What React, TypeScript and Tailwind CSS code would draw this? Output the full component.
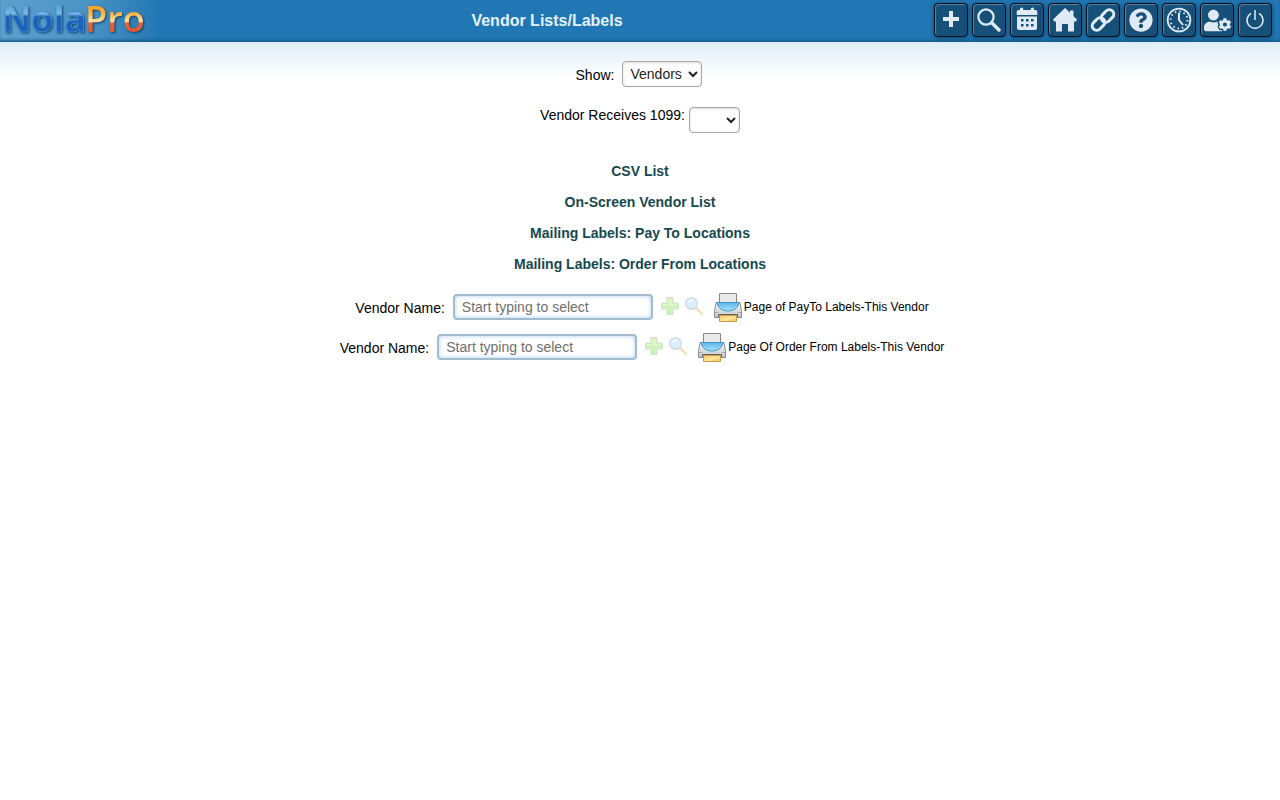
import type { ReactNode } from "react";
import { FaQuestionCircle, FaUserCog } from "react-icons/fa";

type NavButtonProps = {
  label: string;
  children: ReactNode;
};

function NavButton({ label, children }: NavButtonProps) {
  return (
    <button
      type="button"
      aria-label={label}
      className="flex h-[34px] w-[34px] items-center justify-center rounded-[4px] border border-[#020d1c] bg-[#165079] text-[#dfeaf5] shadow-[inset_1px_1px_1px_#5287aa,0_1px_4px_#0d4166]"
    >
      {children}
    </button>
  );
}

function Logo() {
  return (
    <svg
      className="h-[42px] w-40 overflow-visible font-['Open_Sans',sans-serif] drop-shadow-[1px_1px_1px_#123f66]"
      viewBox="0 0 160 42"
      role="img"
      aria-label="NolaPro"
    >
      <defs>
        <linearGradient id="logo-nola" gradientUnits="userSpaceOnUse" x1="0" y1="4" x2="0" y2="32">
          <stop offset="0" stopColor="#4a9adb" />
          <stop offset="0.350" stopColor="#7cbbea" />
          <stop offset="0.450" stopColor="#1a62c0" />
          <stop offset="1" stopColor="#1d63bb" />
        </linearGradient>
        <linearGradient id="logo-pro" gradientUnits="userSpaceOnUse" x1="0" y1="4" x2="0" y2="32">
          <stop offset="0" stopColor="#ff9f1c" />
          <stop offset="0.300" stopColor="#ffae35" />
          <stop offset="0.620" stopColor="#ffe3a6" />
          <stop offset="0.680" stopColor="#e9653c" />
          <stop offset="1" stopColor="#e2552f" />
        </linearGradient>
      </defs>
      <text x="2" y="32" fontSize="36" fontWeight="700" fill="url(#logo-nola)" stroke="#5fa5d8" strokeWidth="0.500">
        Nola
      </text>
      <text x="85" y="32" fontSize="36" fontWeight="600" fill="url(#logo-pro)">
        Pro
      </text>
    </svg>
  );
}

function PlusIcon() {
  return (
    <svg className="mb-0.5 h-4 w-4" viewBox="0 0 16 16" fill="currentColor">
      <path d="M6 0h4v6h6v4h-6v6H6v-6H0V6h6z" />
    </svg>
  );
}

function SearchIcon() {
  return (
    <svg className="h-6 w-6" viewBox="0 0 24 24" fill="none" stroke="currentColor">
      <circle cx="9" cy="9" r="7.600" strokeWidth="2.200" />
      <path d="M15 15l7 7" strokeWidth="3.400" strokeLinecap="round" />
    </svg>
  );
}

function CalendarIcon() {
  return (
    <svg className="mb-0.5 h-6 w-6" viewBox="0 0 24 24" fill="currentColor">
      <path d="M5 3V2a1.600 1.600 0 0 1 3.200 0v1h7.600V2A1.600 1.600 0 0 1 19 2v1h1.500a1.800 1.800 0 0 1 1.800 1.800V8H1.700V4.800A1.800 1.800 0 0 1 3.500 3z" />
      <path
        fillRule="evenodd"
        d="M2 9.500h20V21a2 2 0 0 1-2 2H4a2 2 0 0 1-2-2zM6 12v2.500h2.500V12zm5 0v2.500h2.500V12zm5 0v2.500h2.500V12zM6 17v2.500h2.500V17zm5 0v2.500h2.500V17zm5 0v2.500h2.500V17z"
      />
    </svg>
  );
}

function HomeIcon() {
  return (
    <svg className="h-6 w-6" viewBox="0 0 24 24" fill="currentColor">
      <path d="M12 0l5 4.800V2.500h3.500v5.700L24 11.500l-1 2h-2V23.500h-6V16H9v7.500H3v-10H1l-1-2z" />
    </svg>
  );
}

function LinkIcon() {
  return (
    <svg className="h-[26px] w-[26px]" viewBox="0 0 26 26" fill="none" stroke="currentColor" strokeWidth="3">
      <rect x="-7" y="-4.500" width="14" height="9" rx="4.500" transform="translate(8.500 17) rotate(-45)" />
      <rect x="-7" y="-4.500" width="14" height="9" rx="4.500" transform="translate(17.500 9) rotate(-45)" />
    </svg>
  );
}

function ClockIcon() {
  return (
    <svg className="h-[26px] w-[26px]" viewBox="0 0 26 26" fill="none" stroke="currentColor">
      <circle cx="13" cy="13" r="11.400" strokeWidth="1.800" />
      <path d="M13 6v7l4 5" strokeWidth="2" />
      <circle cx="13" cy="13" r="8.500" strokeWidth="2" strokeDasharray="1.500 2.950" />
    </svg>
  );
}

function PowerIcon() {
  return (
    <svg className="h-5 w-5" viewBox="0 0 20 20" fill="none" stroke="currentColor" strokeWidth="1.500">
      <path d="M10 0v10M6 3.300a8 8 0 1 0 8 0" />
    </svg>
  );
}

function AddIcon() {
  return (
    <svg className="h-5 w-5" viewBox="0 0 20 20">
      <path
        d="M7 1.500h6V7h5.500v6H13v5.500H7V13H1.500V7H7z"
        fill="#cdf2b8"
        stroke="#d0e3c9"
      />
      <path d="M8 3h4v5h5v2H3V8h5z" fill="#daf5ca" />
    </svg>
  );
}

function LookupIcon() {
  return (
    <svg className="h-5 w-5" viewBox="0 0 20 20">
      <path d="M12.500 12.500l5.500 5.500" stroke="#f5dfbf" strokeWidth="2.600" strokeLinecap="round" />
      <circle cx="7.500" cy="7.500" r="5.800" fill="#dceffc" stroke="#d3dde7" strokeWidth="1.500" />
      <path d="M4 7a4 4 0 0 1 6-3z" fill="#f5fbff" />
    </svg>
  );
}

function PrinterIcon({ id }: { id: string }) {
  return (
    <svg className="h-[30px] w-7" viewBox="0 0 28 30">
      <defs>
        <linearGradient id={`${id}-body`} x1="0" y1="0" x2="0" y2="1">
          <stop offset="0" stopColor="#fafafa" />
          <stop offset="1" stopColor="#c3c5cb" />
        </linearGradient>
        <linearGradient id={`${id}-glass`} x1="0" y1="0" x2="0" y2="1">
          <stop offset="0" stopColor="#5db5ea" />
          <stop offset="1" stopColor="#a9e4fd" />
        </linearGradient>
        <linearGradient id={`${id}-sheet`} x1="0" y1="0" x2="1" y2="1">
          <stop offset="0" stopColor="#fbc957" />
          <stop offset="0.500" stopColor="#ffe5a0" />
          <stop offset="1" stopColor="#f7c04b" />
        </linearGradient>
      </defs>
      <path d="M2 10.500h24l1.500 9v6H.5v-6z" fill={`url(#${id}-body)`} stroke="#85888e" />
      <path d="M.5 20.500h4M23.500 20.500h4" stroke="#a4a6ab" />
      <path d="M5.500 1.500h17v10h-17z" fill="#e9eaec" stroke="#85878b" />
      <path d="M3 10.500h22c-.5 5-5 8.500-11 8.500S3.500 15.500 3 10.500z" fill={`url(#${id}-glass)`} stroke="#4095c8" />
      <path d="M4.500 25v-2.500h19V25" fill="none" stroke="#62656b" />
      <path d="M5.500 23.500h17v6h-17z" fill={`url(#${id}-sheet)`} stroke="#cc9c45" />
    </svg>
  );
}

type VendorRowProps = {
  id: string;
  action: string;
};

function VendorRow({ id, action }: VendorRowProps) {
  return (
    <div className="flex h-10 items-center justify-center pl-1">
      <label htmlFor={id} className="mr-2 pt-0.5">
        Vendor Name:
      </label>
      <input
        id={id}
        type="text"
        placeholder="Start typing to select"
        className="h-[26px] w-[200px] rounded-[4px] border-2 border-[#a3bccd] bg-white px-[7px] shadow-[inset_0_0_4px_#a5d3f5] outline-none placeholder:text-[#6f6f6f]"
      />
      <button type="button" aria-label="Add vendor" className="mb-0.5 ml-[7px]">
        <AddIcon />
      </button>
      <button type="button" aria-label="Find vendor" className="mb-0.5 ml-1">
        <LookupIcon />
      </button>
      <button type="button" className="ml-[10px] flex items-center gap-0.5 text-xs">
        <PrinterIcon id={id} />
        {action}
      </button>
    </div>
  );
}

const selectClass =
  "h-[26px] rounded-[4px] border border-[#a6a6a6] bg-white px-[3px] text-[#222] shadow-[inset_0_1px_3px_#ddd]";

const lists = [
  "CSV List",
  "On-Screen Vendor List",
  "Mailing Labels: Pay To Locations",
  "Mailing Labels: Order From Locations",
];

export default function App() {
  return (
    <div className="bg-white font-['Liberation_Sans',Arial,sans-serif] text-sm text-black">
      <header className="flex h-[42px] items-center bg-[#2077b3] pr-2 shadow-[inset_0_-3px_3px_-1px_#155d91]">
        <a
          href="#"
          className="bg-linear-to-r from-[#5ca0ce] via-[#4d95c6] to-[#2077b3] shadow-[inset_0_-3px_3px_-1px_#155d91]"
        >
          <Logo />
        </a>
        <h1 className="flex-1 text-center text-base font-bold text-[#e6f1fa]">Vendor Lists/Labels</h1>
        <nav className="flex gap-1 pb-0.5">
          <NavButton label="Add">
            <PlusIcon />
          </NavButton>
          <NavButton label="Search">
            <SearchIcon />
          </NavButton>
          <NavButton label="Calendar">
            <CalendarIcon />
          </NavButton>
          <NavButton label="Home">
            <HomeIcon />
          </NavButton>
          <NavButton label="Links">
            <LinkIcon />
          </NavButton>
          <NavButton label="Help">
            <FaQuestionCircle size={24} />
          </NavButton>
          <NavButton label="Time clock">
            <ClockIcon />
          </NavButton>
          <NavButton label="User settings">
            <FaUserCog size={27} />
          </NavButton>
          <NavButton label="Log out">
            <PowerIcon />
          </NavButton>
        </nav>
      </header>

      <main className="bg-linear-to-b from-[#deedf8] to-white to-[36px] pt-[19px]">
        <div className="flex items-center justify-center gap-2 pr-0.5">
          <label htmlFor="show" className="pt-0.5">
            Show:
          </label>
          <select id="show" className={`${selectClass} w-20`}>
            <option>Vendors</option>
          </select>
        </div>
        <div className="mt-5 flex items-start justify-center gap-1">
          <label htmlFor="receives-1099" className="-mt-0.5">
            Vendor Receives 1099:
          </label>
          <select id="receives-1099" className={`${selectClass} w-[51px]`}>
            <option></option>
            <option>Yes</option>
            <option>No</option>
          </select>
        </div>

        <ul className="mt-7 flex flex-col items-center gap-[11px] font-bold text-[#16484f]">
          {lists.map((name) => (
            <li key={name}>
              <a href="#">{name}</a>
            </li>
          ))}
        </ul>

        <div className="mt-[13px]">
          <VendorRow id="pay-to-vendor" action="Page of PayTo Labels-This Vendor" />
          <VendorRow id="order-from-vendor" action="Page Of Order From Labels-This Vendor" />
        </div>
      </main>
    </div>
  );
}
